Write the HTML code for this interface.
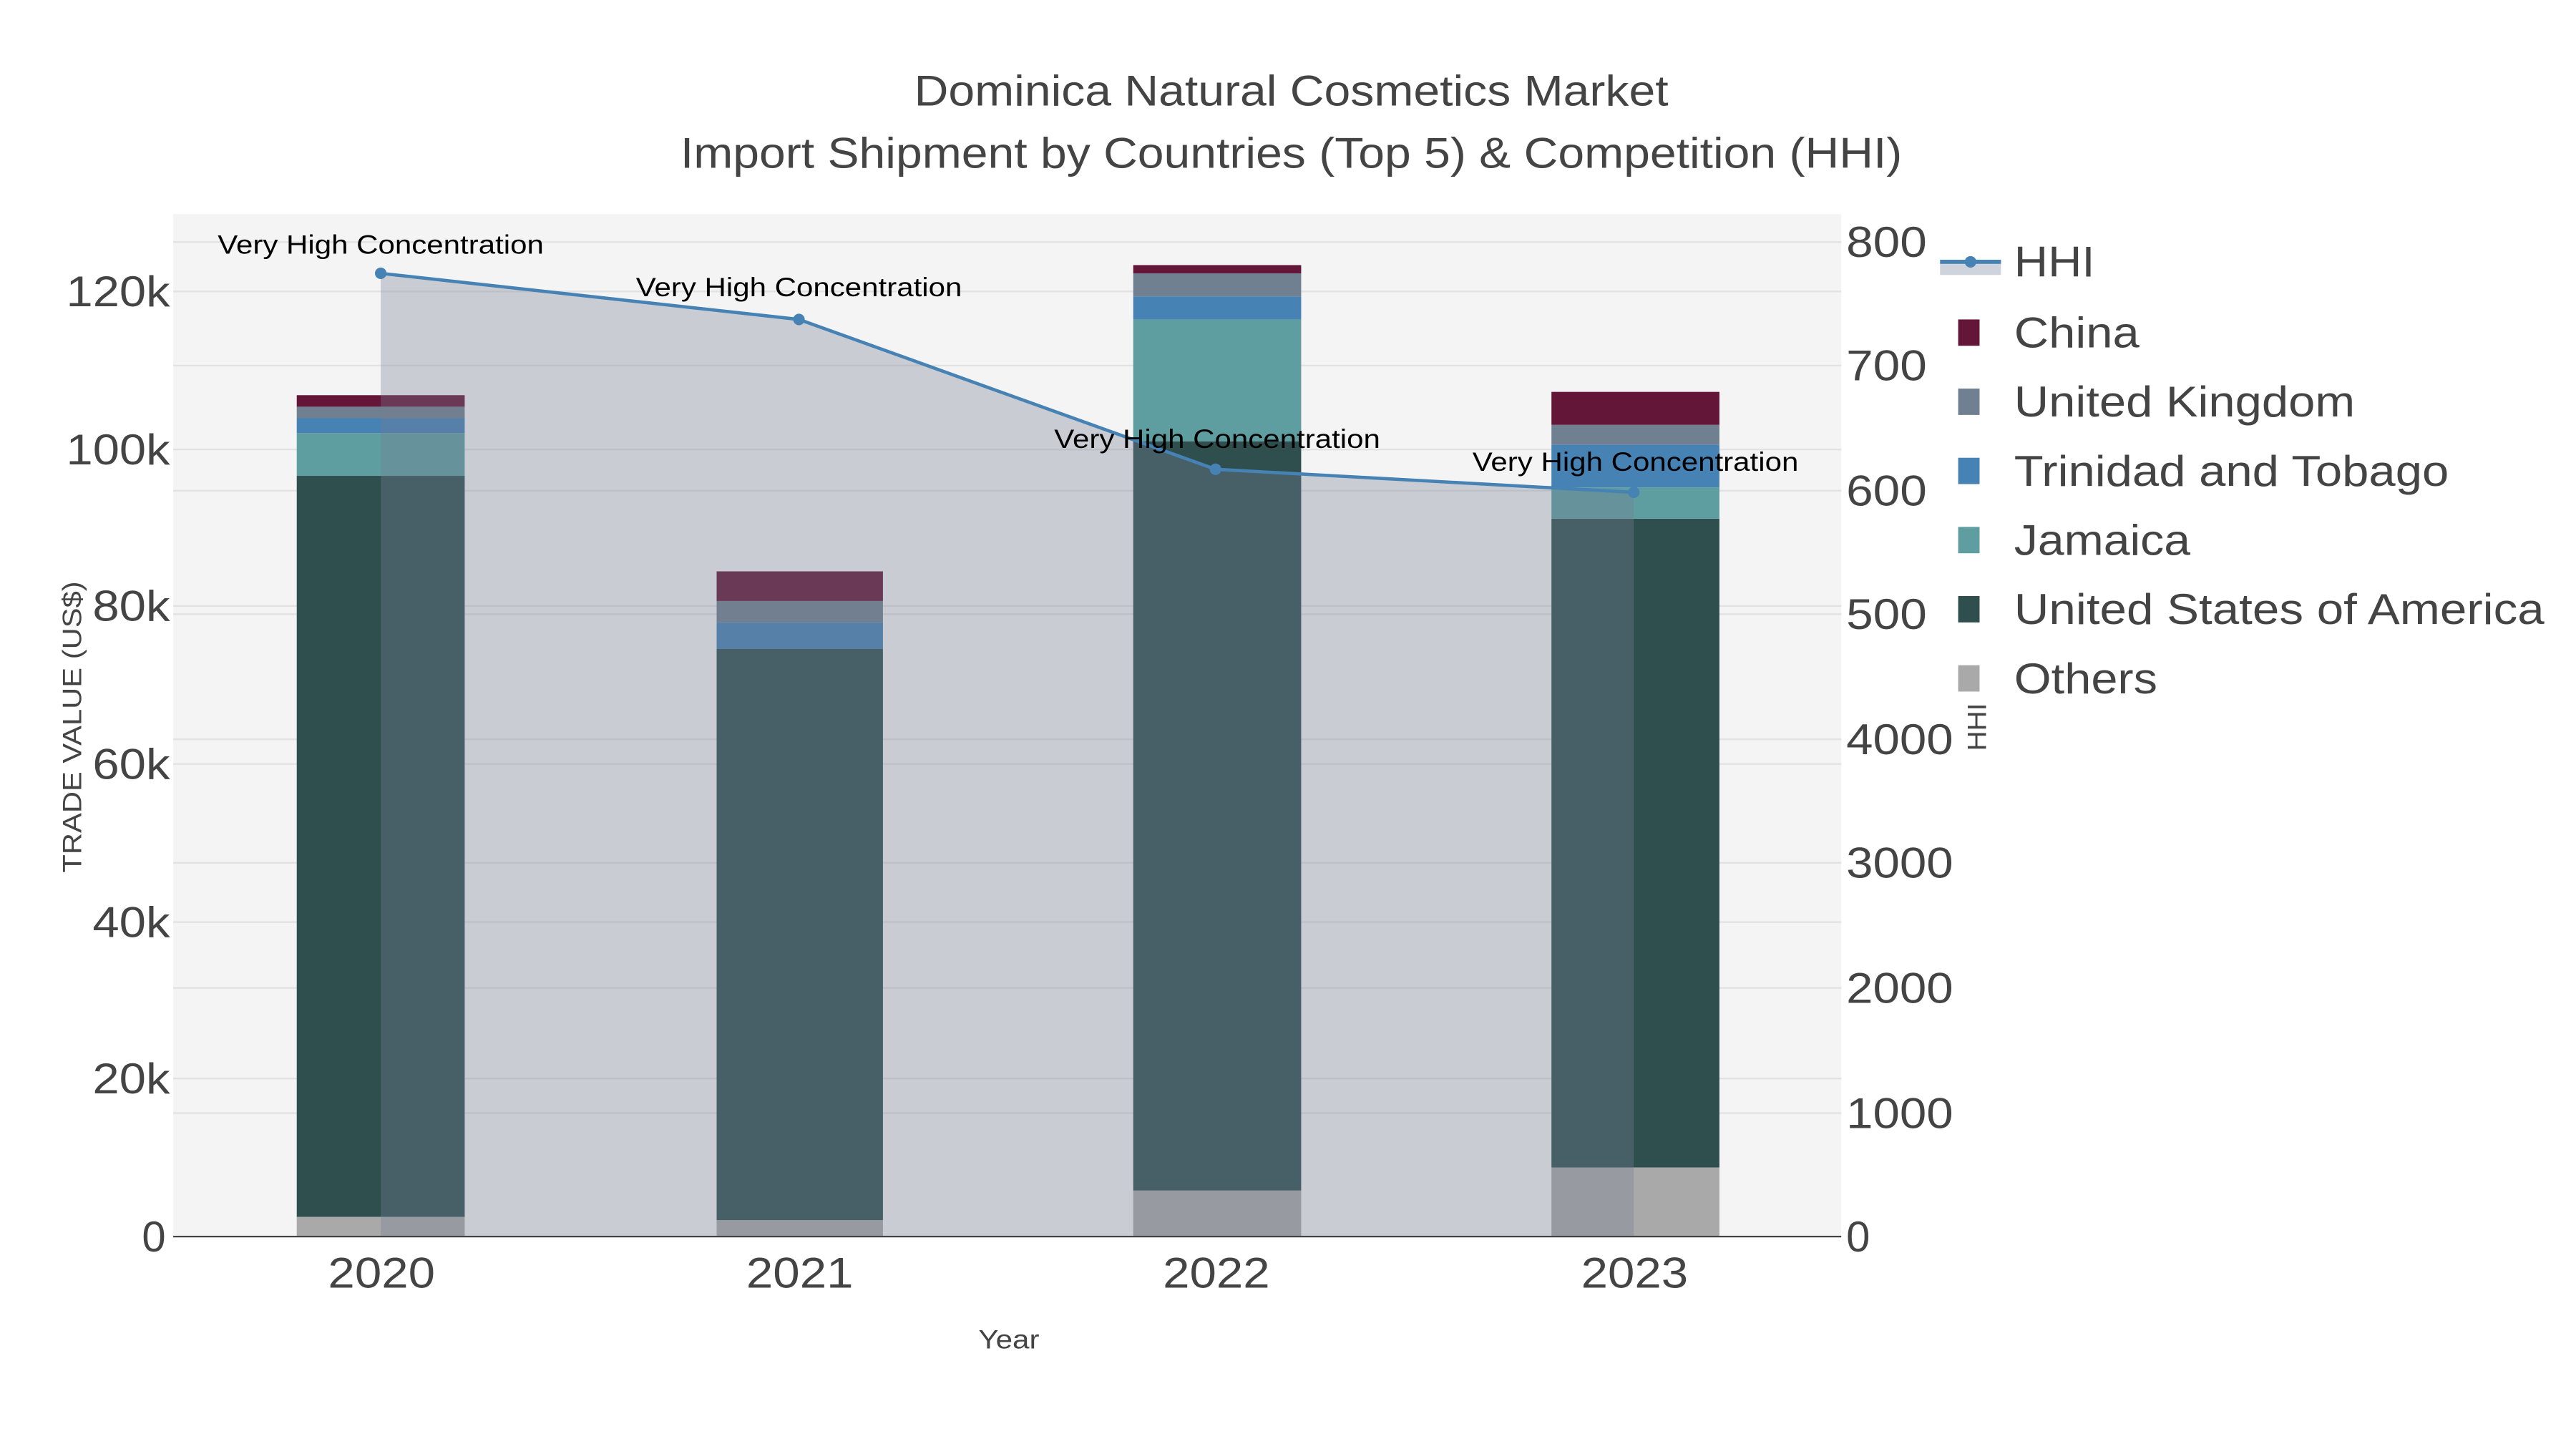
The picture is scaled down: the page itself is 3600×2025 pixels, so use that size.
<!DOCTYPE html>
<html><head><style>html,body{margin:0;padding:0;background:#fff;}svg{display:block}</style></head>
<body>
<svg width="3600" height="2025" viewBox="0 0 1564 880" xmlns="http://www.w3.org/2000/svg" font-family="Liberation Sans, sans-serif">
<rect width="1564" height="880" fill="#fff"/>
<rect x="105" y="130" width="1013" height="621" fill="#f4f4f4"/>
<g stroke="#e2e2e2" stroke-width="1">
<line x1="105" x2="1118" y1="177" y2="177"/><line x1="105" x2="1118" y1="273" y2="273"/><line x1="105" x2="1118" y1="368" y2="368"/><line x1="105" x2="1118" y1="464" y2="464"/><line x1="105" x2="1118" y1="560" y2="560"/><line x1="105" x2="1118" y1="655" y2="655"/>
<line x1="105" x2="1118" y1="147" y2="147"/><line x1="105" x2="1118" y1="222" y2="222"/><line x1="105" x2="1118" y1="298" y2="298"/><line x1="105" x2="1118" y1="373" y2="373"/><line x1="105" x2="1118" y1="449" y2="449"/><line x1="105" x2="1118" y1="524" y2="524"/><line x1="105" x2="1118" y1="600" y2="600"/><line x1="105" x2="1118" y1="676" y2="676"/>
</g>
<rect x="180" y="739" width="102" height="12" fill="#a9a9a9"/>
<rect x="180" y="289" width="102" height="450" fill="#2f4f4f"/>
<rect x="180" y="263" width="102" height="26" fill="#5f9ea0"/>
<rect x="180" y="254" width="102" height="9" fill="#4682b4"/>
<rect x="180" y="247" width="102" height="7" fill="#708090"/>
<rect x="180" y="240" width="102" height="7" fill="#641638"/>
<rect x="435" y="741" width="101" height="10" fill="#a9a9a9"/>
<rect x="435" y="394" width="101" height="347" fill="#2f4f4f"/>
<rect x="435" y="378" width="101" height="16" fill="#4682b4"/>
<rect x="435" y="365" width="101" height="13" fill="#708090"/>
<rect x="435" y="347" width="101" height="18" fill="#641638"/>
<rect x="688" y="723" width="102" height="28" fill="#a9a9a9"/>
<rect x="688" y="268" width="102" height="455" fill="#2f4f4f"/>
<rect x="688" y="194" width="102" height="74" fill="#5f9ea0"/>
<rect x="688" y="180" width="102" height="14" fill="#4682b4"/>
<rect x="688" y="166" width="102" height="14" fill="#708090"/>
<rect x="688" y="161" width="102" height="5" fill="#641638"/>
<rect x="942" y="709" width="102" height="42" fill="#a9a9a9"/>
<rect x="942" y="315" width="102" height="394" fill="#2f4f4f"/>
<rect x="942" y="296" width="102" height="19" fill="#5f9ea0"/>
<rect x="942" y="270" width="102" height="26" fill="#4682b4"/>
<rect x="942" y="258" width="102" height="12" fill="#708090"/>
<rect x="942" y="238" width="102" height="20" fill="#641638"/>
<polygon points="231,166 485,194 738,285 992,299 992,751 231,751" fill="rgb(116,126,148)" fill-opacity="0.34"/>
<polyline points="231,166 485,194 738,285 992,299" fill="none" stroke="#4682b4" stroke-width="2"/>
<g fill="#4682b4"><circle cx="231" cy="166" r="3.5"/><circle cx="485" cy="194" r="3.5"/><circle cx="738" cy="285" r="3.5"/><circle cx="992" cy="299" r="3.5"/></g>
<line x1="105" x2="1118" y1="751" y2="751" stroke="#444" stroke-width="1"/>
<g font-size="16" fill="#000">
<text x="132" y="154" textLength="198" lengthAdjust="spacingAndGlyphs">Very High Concentration</text>
<text x="386" y="180" textLength="198" lengthAdjust="spacingAndGlyphs">Very High Concentration</text>
<text x="640" y="272" textLength="198" lengthAdjust="spacingAndGlyphs">Very High Concentration</text>
<text x="894" y="286" textLength="198" lengthAdjust="spacingAndGlyphs">Very High Concentration</text>
</g>
<g fill="#444" font-size="26">
<text x="555" y="64" textLength="458" lengthAdjust="spacingAndGlyphs">Dominica Natural Cosmetics Market</text>
<text x="413" y="102" textLength="742" lengthAdjust="spacingAndGlyphs">Import Shipment by Countries (Top 5) &amp; Competition (HHI)</text>
<text x="199" y="782" textLength="65" lengthAdjust="spacingAndGlyphs">2020</text>
<text x="453" y="782" textLength="65" lengthAdjust="spacingAndGlyphs">2021</text>
<text x="706" y="782" textLength="65" lengthAdjust="spacingAndGlyphs">2022</text>
<text x="960" y="782" textLength="65" lengthAdjust="spacingAndGlyphs">2023</text>
</g>
<text x="594" y="819" font-size="16" fill="#444" textLength="37" lengthAdjust="spacingAndGlyphs">Year</text>
<g fill="#444" font-size="26">
<text x="86" y="760">0</text>
<text x="56" y="664" textLength="47" lengthAdjust="spacingAndGlyphs">20k</text>
<text x="56" y="569" textLength="47" lengthAdjust="spacingAndGlyphs">40k</text>
<text x="56" y="473" textLength="47" lengthAdjust="spacingAndGlyphs">60k</text>
<text x="56" y="377" textLength="47" lengthAdjust="spacingAndGlyphs">80k</text>
<text x="40" y="282" textLength="63" lengthAdjust="spacingAndGlyphs">100k</text>
<text x="40" y="186" textLength="63" lengthAdjust="spacingAndGlyphs">120k</text>
</g>
<g fill="#444" font-size="26">
<text x="1121" y="760">0</text>
<text x="1121" y="685" textLength="65" lengthAdjust="spacingAndGlyphs">1000</text>
<text x="1121" y="609" textLength="65" lengthAdjust="spacingAndGlyphs">2000</text>
<text x="1121" y="533" textLength="65" lengthAdjust="spacingAndGlyphs">3000</text>
<text x="1121" y="458" textLength="65" lengthAdjust="spacingAndGlyphs">4000</text>
<text x="1121" y="382" textLength="49" lengthAdjust="spacingAndGlyphs">500</text>
<text x="1121" y="307" textLength="49" lengthAdjust="spacingAndGlyphs">600</text>
<text x="1121" y="231" textLength="49" lengthAdjust="spacingAndGlyphs">700</text>
<text x="1121" y="156" textLength="49" lengthAdjust="spacingAndGlyphs">800</text>
</g>
<text transform="translate(49,530) rotate(-90)" font-size="16" fill="#444" textLength="177" lengthAdjust="spacingAndGlyphs">TRADE VALUE (US$)</text>
<text transform="translate(1206,456) rotate(-90)" font-size="16" fill="#444" textLength="29" lengthAdjust="spacingAndGlyphs">HHI</text>
<rect x="1178" y="159" width="37" height="8" fill="#cfd4dc"/>
<line x1="1178" x2="1215" y1="159" y2="159" stroke="#4682b4" stroke-width="2.5"/>
<circle cx="1196.5" cy="159" r="3.5" fill="#4682b4"/>
<g font-size="26" fill="#444">
<text x="1223" y="168" textLength="49" lengthAdjust="spacingAndGlyphs">HHI</text>
<text x="1223" y="211" textLength="76" lengthAdjust="spacingAndGlyphs">China</text>
<text x="1223" y="253" textLength="207" lengthAdjust="spacingAndGlyphs">United Kingdom</text>
<text x="1223" y="295" textLength="264" lengthAdjust="spacingAndGlyphs">Trinidad and Tobago</text>
<text x="1223" y="337" textLength="107" lengthAdjust="spacingAndGlyphs">Jamaica</text>
<text x="1223" y="379" textLength="322" lengthAdjust="spacingAndGlyphs">United States of America</text>
<text x="1223" y="421" textLength="87" lengthAdjust="spacingAndGlyphs">Others</text>
</g>
<rect x="1189" y="194" width="13" height="16" fill="#641638"/>
<rect x="1189" y="236" width="13" height="16" fill="#708090"/>
<rect x="1189" y="278" width="13" height="16" fill="#4682b4"/>
<rect x="1189" y="320" width="13" height="16" fill="#5f9ea0"/>
<rect x="1189" y="362" width="13" height="16" fill="#2f4f4f"/>
<rect x="1189" y="404" width="13" height="16" fill="#a9a9a9"/>
</svg>
</body></html>
